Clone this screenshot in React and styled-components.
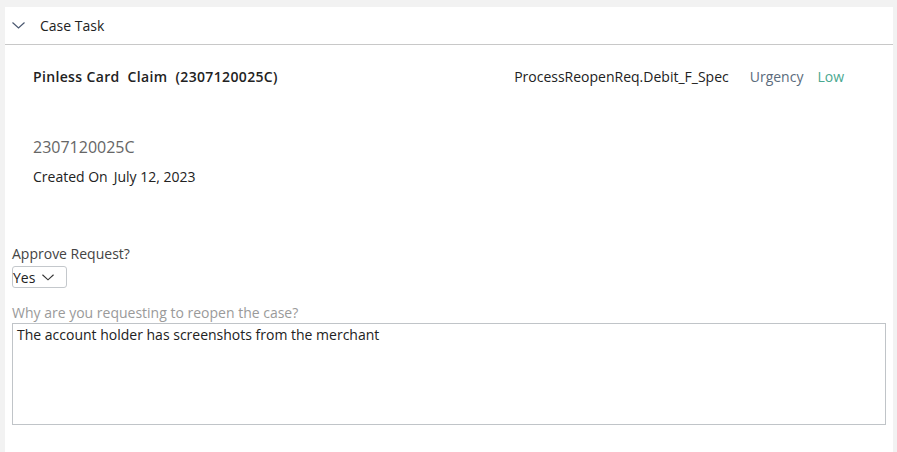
import React from "react";
import styled, { createGlobalStyle } from "styled-components";

const GlobalStyle = createGlobalStyle`
  html, body {
    margin: 0;
    padding: 0;
    background: #f2f2f2;
    font-family: "Open Sans", "Liberation Sans", sans-serif;
    color: #222;
  }
`;

const Page = styled.div`
  padding: 7px 4px 0 5px;
  height: 452px;
  box-sizing: border-box;
  overflow: hidden;
`;

const Card = styled.section`
  background: #fff;
  height: 100%;
`;

const Header = styled.div`
  display: flex;
  align-items: center;
  height: 37px;
  border-bottom: 1px solid #c8c8c8;
  padding-left: 7px;
  gap: 15px;
  font-size: 14px;
  color: #222;
`;

const Body = styled.div`
  padding: 20px 7px 0 7px;
`;

const Summary = styled.div`
  padding: 0 21px;
`;

const TitleRow = styled.div`
  display: flex;
  align-items: center;
  height: 22px;
`;

const Title = styled.h2`
  margin: 0;
  flex: 1;
  display: flex;
  gap: 8px;
  font-size: 14px;
  font-weight: 600;
  letter-spacing: 0.35px;
`;

const Meta = styled.span`
  font-size: 14px;
  color: ${(p) => p.color || "#222"};
  margin-left: ${(p) => p.gap || 0}px;
`;

const CaseId = styled.div`
  margin-top: 49px;
  font-size: 16px;
  color: #666;
  line-height: 22px;
`;

const Created = styled.div`
  display: flex;
  gap: 6px;
  margin-top: 9px;
  font-size: 14px;
  line-height: 20px;
`;

const Field = styled.div`
  display: flex;
  flex-direction: column;
  align-items: flex-start;
  margin-top: ${(p) => p.top}px;
`;

const Label = styled.label`
  font-size: 14px;
  line-height: 20px;
  color: ${(p) => (p.muted ? "#9a9a9a" : "#444")};
`;

const Select = styled.div`
  display: flex;
  align-items: center;
  gap: 7px;
  height: 20px;
  width: 53px;
  box-sizing: content-box;
  border: 1px solid #c4c8cc;
  border-radius: 3px;
  margin-top: 2px;
  font-size: 14px;
  color: #222;
`;

const TextArea = styled.div`
  box-sizing: border-box;
  width: 874px;
  height: 102px;
  border: 1px solid #c0c4c8;
  padding: 1px 4px;
  font-size: 14px;
  line-height: 20px;
  color: #222;
`;

const Chevron = ({ w = 13, h = 7, color = "#4a5870" }) => (
  <svg width={w} height={h} viewBox="0 0 13 7" fill="none">
    <path d="M0.5 0.5 L6.5 6 L12.5 0.5" stroke={color} strokeWidth="1.2" />
  </svg>
);

export default function App() {
  return (
    <>
      <GlobalStyle />
      <Page>
        <Card>
          <Header>
            <Chevron />
            <span>Case Task</span>
          </Header>
          <Body>
            <Summary>
              <TitleRow>
                <Title>
                  <span>Pinless Card</span>
                  <span>Claim</span>
                  <span>(2307120025C)</span>
                </Title>
                <Meta>ProcessReopenReq.Debit_F_Spec</Meta>
                <Meta color="#5b6b7c" gap={21}>Urgency</Meta>
                <Meta color="#4aa890" gap={14}>Low</Meta>
                <Meta gap={21} />
              </TitleRow>
              <CaseId>2307120025C</CaseId>
              <Created>
                <span>Created On</span>
                <span>July 12, 2023</span>
              </Created>
            </Summary>
            <Field top={57}>
              <Label>Approve Request?</Label>
              <Select>
                Yes
                <Chevron w={12} h={7} color="#333" />
              </Select>
            </Field>
            <Field top={15}>
              <Label muted>Why are you requesting to reopen the case?</Label>
              <TextArea>The account holder has screenshots from the merchant</TextArea>
            </Field>
          </Body>
        </Card>
      </Page>
    </>
  );
}
